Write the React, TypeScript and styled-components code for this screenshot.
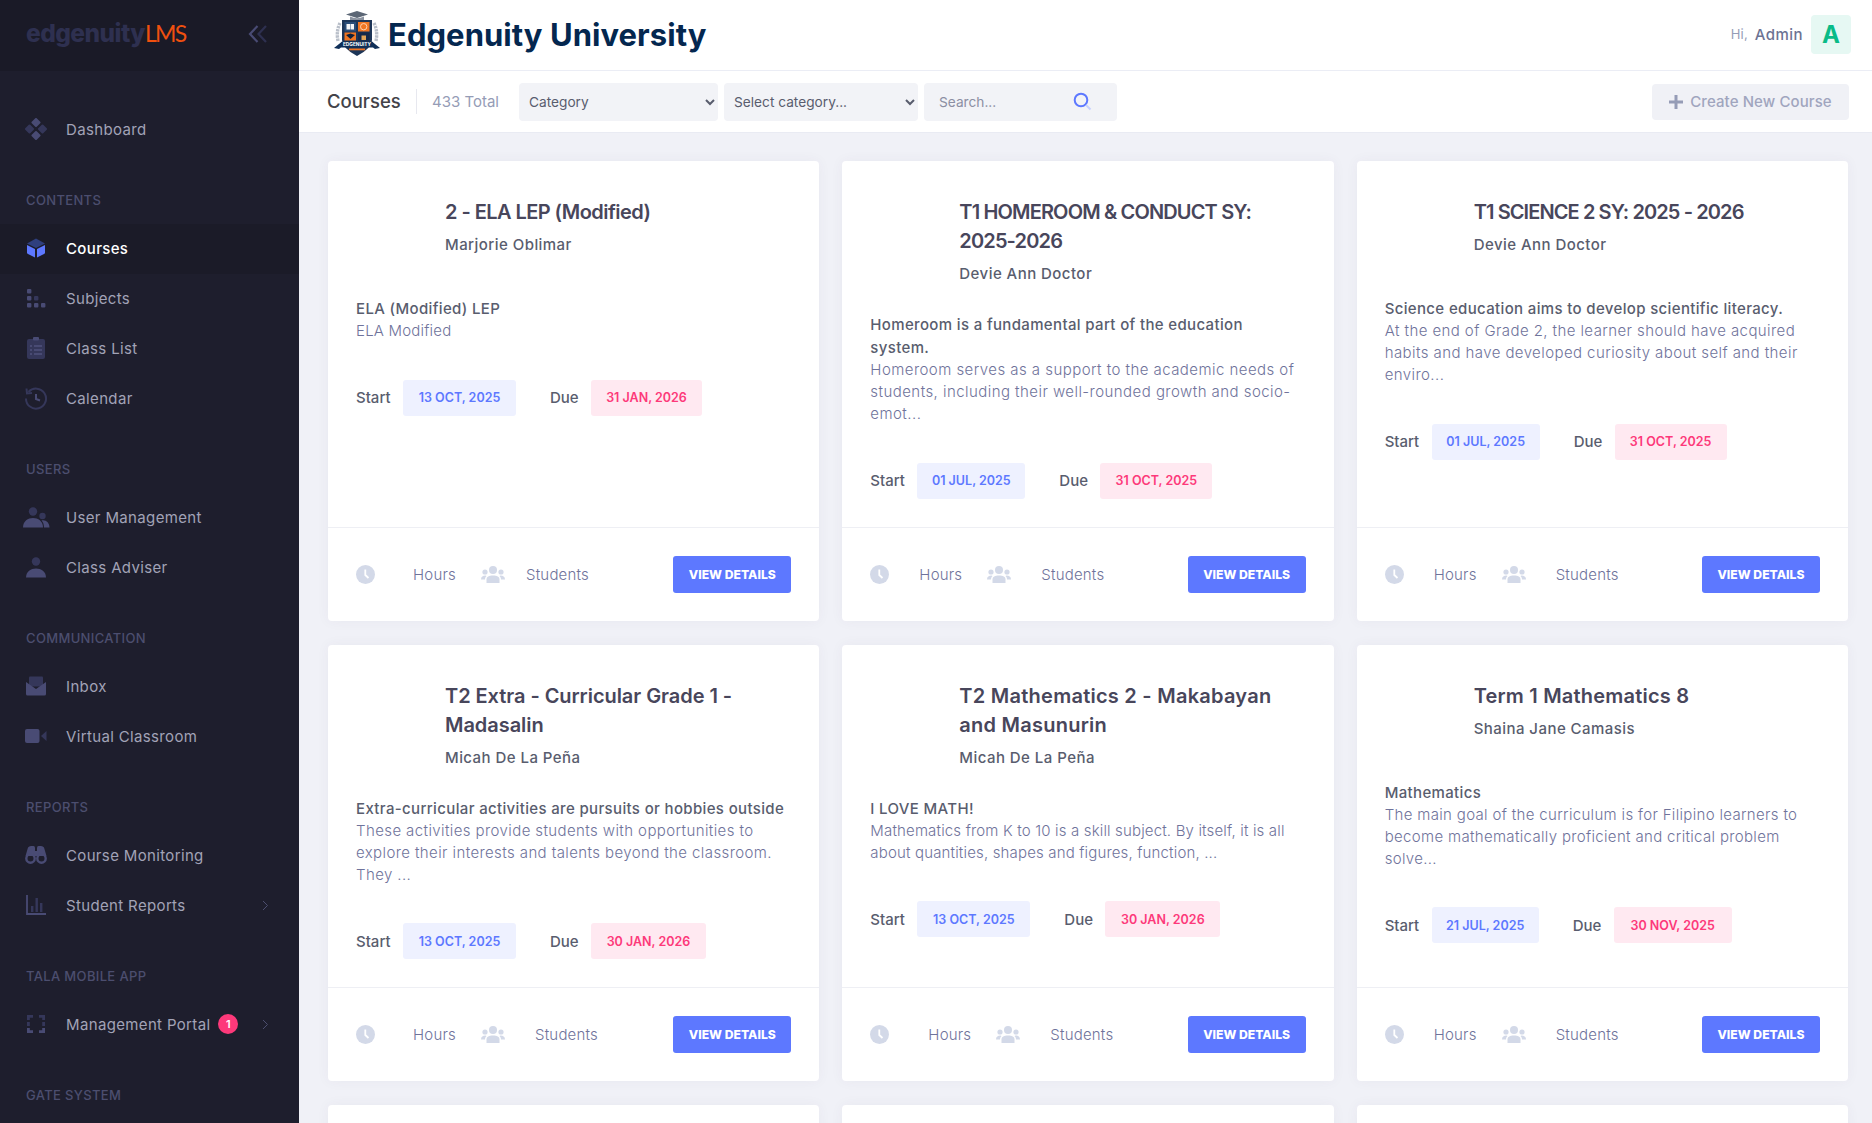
import React from 'react';
import styled, { createGlobalStyle } from 'styled-components';

const FONT = `Inter, "Open Sans", "Liberation Sans", sans-serif`;

const Global = createGlobalStyle`
  html, body { margin: 0; padding: 0; height: 100%; overflow: hidden; background: #f0f1f7; }
  * { box-sizing: border-box; }
  body { font-family: ${FONT}; }
`;

const Page = styled.div`display: flex; height: 1123px; overflow: hidden;`;

const Sidebar = styled.aside`
  width: 299px; flex: none; background: #1e1e2d; height: 100%; overflow: hidden;
`;
const Brand = styled.div`
  height: 71px; background: #1a1a27; display: flex; align-items: center;
  justify-content: space-between; padding: 0 31px 4px 26px;
`;
const BrandName = styled.div`
  font-size: 24.5px; font-weight: 800; color: #2e3050; letter-spacing: -0.55px; line-height: 1;
  span { font-family: Lato, sans-serif; color: #f0500f; font-weight: 400; font-size: 23px; letter-spacing: -1.6px; }
`;
const Nav = styled.nav`padding-top: 34px;`;
const Section = styled.div`
  height: 48px; margin-top: 21px; padding-left: 26px; display: flex; align-items: center;
  color: #4c4e6f; font-size: 13px; font-weight: 500; letter-spacing: 0.35px; text-transform: uppercase;
`;
const Item = styled.div<{ $active?: boolean }>`
  height: 50px; display: flex; align-items: center; padding: 0 30px 2px 22px;
  background: ${p => (p.$active ? '#1b1b28' : 'transparent')};
  color: ${p => (p.$active ? '#ffffff' : '#a2a3b7')};
  font-size: 15px; font-weight: ${p => (p.$active ? 500 : 400)}; letter-spacing: 0.35px;
`;
const ItemIcon = styled.span`
  width: 28px; height: 24px; margin-right: 16px; flex: none; display: flex; align-items: center; justify-content: center;
`;
const ItemLabel = styled.span`white-space: nowrap;`;
const Badge = styled.span`
  width: 20px; height: 20px; border-radius: 50%; background: #fd397a; color: #fff; margin-left: 8px;
  font-size: 11px; font-weight: 600; display: flex; align-items: center; justify-content: center; letter-spacing: 0;
`;
const Arrow = styled.span`margin-left: auto; display: flex; align-items: center;`;

const Main = styled.main`flex: 1; min-width: 0; display: flex; flex-direction: column; height: 100%;`;
const TopBar = styled.header`
  height: 71px; flex: none; background: #fff; border-bottom: 1px solid #ebedf5; display: flex;
  align-items: center; justify-content: space-between; padding: 0 21px 2px 35px;
`;
const Org = styled.div`display: flex; align-items: center; gap: 8px;`;
const OrgName = styled.div`
  font-size: 31px; font-weight: 700; color: #04274f; letter-spacing: 0.05px; line-height: 1;
`;
const User = styled.div`display: flex; align-items: center;`;
const Hi = styled.span`font-size: 13px; color: #959cb6; margin-right: 7px; letter-spacing: 0.2px;`;
const UserName = styled.span`font-size: 15px; font-weight: 500; color: #6c7293; margin-right: 8px; letter-spacing: 0.45px;`;
const Avatar = styled.div`
  width: 40px; height: 39px; border-radius: 4px; background: #e6f8f3; color: #0abb87; font-size: 24px;
  font-weight: 700; display: flex; align-items: center; justify-content: center;
`;
const ToolBar = styled.div`
  height: 62px; flex: none; background: #fff; border-bottom: 1px solid #e9ebf3; display: flex;
  align-items: center; padding: 0 23px 0 28px;
`;
const PageTitle = styled.h3`
  margin: 0; font-size: 18.5px; font-weight: 500; color: #434349; border-right: 1px solid #e7e8ef;
  height: 25px; line-height: 25px; width: 90px; white-space: nowrap;
`;
const Total = styled.span`
  font-size: 15px; font-weight: 400; color: #959cb6; margin-left: 15px; width: 87px; white-space: nowrap;
`;
const Select = styled.select<{ $w: number }>`
  width: ${p => p.$w}px; height: 38px; border: 0; border-radius: 4px; background: #f2f3f7; color: #595d6e;
  font-family: ${FONT}; font-size: 13.7px; padding: 0 6px; margin-right: 6px; outline: none;
`;
const SearchBox = styled.div`
  width: 193px; height: 38px; border-radius: 4px; background: #f2f3f7; display: flex; align-items: center;
  justify-content: space-between; padding: 0 25px 0 15px; color: #8c8fa3; font-size: 13.7px;
`;
const CreateBtn = styled.button`
  margin-left: auto; width: 197px; height: 36px; border: 0; border-radius: 4px; background: #f0f1f6;
  color: #a0a5be; font-family: ${FONT}; font-size: 15px; font-weight: 500; display: flex; align-items: center;
  justify-content: center; gap: 7px; padding: 0; letter-spacing: 0.1px;
`;
const Content = styled.div`
  flex: 1; min-height: 0; overflow: hidden; padding: 28px 24px 0 29px;
`;
const Grid = styled.div`display: grid; grid-template-columns: repeat(3, 1fr); gap: 24px 23px;`;
const Card = styled.article`
  background: #fff; border-radius: 4px; box-shadow: 0 0 13px rgba(82, 63, 105, 0.05); display: flex; flex-direction: column;
`;
const CardBody = styled.div`flex: 1; padding: 37px 28px 28px 28px;`;
const CardHead = styled.div`padding-left: 89px; min-height: 71px; margin-bottom: 28px;`;
const Title = styled.h4<{ $ls: number }>`
  margin: 0; font-size: 20px; font-weight: 600; line-height: 29px; color: #48465b; white-space: nowrap;
  letter-spacing: ${p => p.$ls}px;
`;
const Teacher = styled.div`
  margin-top: 7px; font-size: 15px; line-height: 22px; font-weight: 500; color: #595d6e; letter-spacing: 0.45px;
`;
const Lead = styled.div`
  font-size: 15px; line-height: 23px; font-weight: 500; color: #595d6e; white-space: nowrap; letter-spacing: 0.35px;
`;
const Desc = styled.div<{ $ls: number }>`
  font-size: 15px; line-height: 22px; font-weight: 300; color: #6f739b; white-space: nowrap;
  letter-spacing: ${p => p.$ls}px;
`;
const Dates = styled.div`display: flex; align-items: center; margin-top: 37.5px;`;
const DateLabel = styled.span<{ $w: number }>`
  font-size: 15px; font-weight: 500; color: #595d6e; width: ${p => p.$w}px; flex: none;
`;
const Chip = styled.span<{ $due?: boolean; $w: number }>`
  width: ${p => p.$w}px; height: 36px; border-radius: 3px; display: flex; align-items: center; justify-content: center;
  font-size: 12.5px; font-weight: 600; white-space: nowrap; margin-right: ${p => (p.$due ? 0 : 34)}px;
  background: ${p => (p.$due ? '#ffe9f1' : '#eef1ff')};
  color: ${p => (p.$due ? '#fd397a' : '#5d78ff')};
`;
const CardFooter = styled.footer`
  height: 94px; border-top: 1px solid #eeeff4; display: flex; align-items: center; padding: 0 28px 0 28px; flex: none;
`;
const Meta = styled.span<{ $pad: number; $w: number }>`
  font-size: 15px; font-weight: 300; color: #6f739b; margin-left: ${p => p.$pad}px; width: ${p => p.$w}px;
  white-space: nowrap; letter-spacing: 0.2px;
`;
const MetaIcon = styled.span<{ $gap?: number }>`
  display: flex; align-items: center; flex: none; margin-left: ${p => p.$gap ?? 0}px;
`;
const ViewBtn = styled.button`
  margin-left: auto; width: 118px; height: 37px; border: 0; border-radius: 3px; background: #5d78ff; color: #fff;
  font-family: ${FONT}; font-size: 12.2px; font-weight: 800; padding: 0;
`;
const BlankCard = styled(Card)`height: 300px;`;

const C = '#494b74';
const D = '#35375a';
const icons: Record<string, React.ReactNode> = {
  dash: (
    <svg width="22" height="22" viewBox="0 0 22 22">
      <rect x="7.5" y="1" width="7" height="7" rx="1" transform="rotate(45 11 4.5)" fill={C} />
      <rect x="7.5" y="14" width="7" height="7" rx="1" transform="rotate(45 11 17.5)" fill={C} />
      <rect x="1" y="7.5" width="7" height="7" rx="1" transform="rotate(45 4.5 11)" fill={D} />
      <rect x="14" y="7.5" width="7" height="7" rx="1" transform="rotate(45 17.5 11)" fill={D} />
    </svg>
  ),
  cube: (
    <svg width="20" height="20" viewBox="0 0 20 20">
      <path d="M10 0.5 L19 5.5 L10 10 L1 5.5Z" fill="#2f3f7e" />
      <path d="M1 7 L9 11 V19.5 L2 16 Q1 15.5 1 14.5Z" fill="#5d78ff" />
      <path d="M19 7 L11 11 V19.5 L18 16 Q19 15.5 19 14.5Z" fill="#5d78ff" />
    </svg>
  ),
  subj: (
    <svg width="20" height="20" viewBox="0 0 20 20" fill={C}>
      <rect x="1" y="1" width="4.4" height="4.4" rx="1" />
      <rect x="1" y="8" width="4.4" height="4.4" rx="1" />
      <rect x="8" y="8" width="4.4" height="4.4" rx="1" fill={D} />
      <rect x="1" y="15" width="4.4" height="4.4" rx="1" />
      <rect x="8" y="15" width="4.4" height="4.4" rx="1" />
      <rect x="15" y="15" width="4.4" height="4.4" rx="1" />
    </svg>
  ),
  list: (
    <svg width="20" height="24" viewBox="0 0 20 24">
      <rect x="1" y="3" width="18" height="20" rx="2" fill={D} />
      <rect x="7" y="1" width="6" height="3.5" rx="1" fill={C} />
      <g fill={C}>
        <rect x="4" y="9" width="2" height="2" /><rect x="8" y="9" width="8" height="2" />
        <rect x="4" y="13" width="2" height="2" /><rect x="8" y="13" width="8" height="2" />
        <rect x="4" y="17" width="2" height="2" /><rect x="8" y="17" width="8" height="2" />
      </g>
    </svg>
  ),
  cal: (
    <svg width="24" height="24" viewBox="0 0 24 24" fill="none">
      <path d="M4.5 6 A10 10 0 1 1 2 12.5" stroke={D} strokeWidth="2" />
      <path d="M2.5 2.5 L3 7.5 L8 7" stroke={D} strokeWidth="2" />
      <path d="M12 8 V13 L16 14.5" stroke={C} strokeWidth="2" />
    </svg>
  ),
  users: (
    <svg width="27" height="21" viewBox="0 0 27 21">
      <circle cx="10" cy="4.5" r="4.2" fill={D} />
      <circle cx="19.5" cy="9" r="3.2" fill={D} />
      <path d="M0 20.5 C0 14 5 11 10 11 C15 11 20 14 20 20.5Z" fill={C} />
      <path d="M21 20.5 C21 17 20 15 18.5 13.5 C23 12.5 26.5 16 26.5 20.5Z" fill={C} />
    </svg>
  ),
  user: (
    <svg width="20" height="21" viewBox="0 0 20 21">
      <circle cx="10" cy="4.5" r="4.2" fill={D} />
      <path d="M0 20.5 C0 14.5 5 11.5 10 11.5 C15 11.5 20 14.5 20 20.5Z" fill={C} />
    </svg>
  ),
  inbox: (
    <svg width="20" height="20" viewBox="0 0 20 20">
      <rect x="3" y="0.5" width="14" height="10" rx="1" fill={D} />
      <path d="M0 6 L10 13 L20 6 V18 Q20 19.5 18.5 19.5 H1.5 Q0 19.5 0 18Z" fill={C} />
    </svg>
  ),
  video: (
    <svg width="22" height="14" viewBox="0 0 22 14">
      <rect x="0" y="0" width="14.5" height="14" rx="2" fill={C} />
      <path d="M16 7 L21.5 2 V12Z" fill={D} />
    </svg>
  ),
  bino: (
    <svg width="22" height="18" viewBox="0 0 22 18">
      <path d="M3 1.5 Q4 0 6 0 H8.5 Q10 0 10 2 V5 H12 V2 Q12 0 13.5 0 H16 Q18 0 19 1.5 L21.5 10 H0.5Z" fill={C} />
      <circle cx="5.5" cy="12.5" r="4.2" fill="none" stroke={C} strokeWidth="2.4" />
      <circle cx="16.5" cy="12.5" r="4.2" fill="none" stroke={C} strokeWidth="2.4" />
    </svg>
  ),
  chart: (
    <svg width="20" height="20" viewBox="0 0 20 20">
      <path d="M1 0 V19 H20" fill="none" stroke={C} strokeWidth="1.8" />
      <rect x="5" y="11" width="2.4" height="6" fill={D} />
      <rect x="9.5" y="3" width="2.4" height="14" fill={D} />
      <rect x="14" y="8" width="2.4" height="9" fill={D} />
    </svg>
  ),
  scan: (
    <svg width="18" height="18" viewBox="0 0 18 18" fill="none" strokeWidth="2.8">
      <path d="M1.4 5 V1.4 H6 M12 1.4 H16.6 V5" stroke={D} />
      <path d="M1.4 7 V11 M16.6 7 V11" stroke={D} />
      <path d="M1.4 13 V16.6 H6 M12 16.6 H16.6 V13" stroke={C} />
    </svg>
  ),
};

const Clock = () => (
  <svg width="19" height="19" viewBox="0 0 19 19">
    <circle cx="9.5" cy="9.5" r="9.5" fill="#d3d9e8" />
    <path d="M9.3 4.5 V10 L12.5 13" fill="none" stroke="#fff" strokeWidth="1.8" />
  </svg>
);
const People = () => (
  <svg width="24" height="17" viewBox="0 0 24 17" fill="#d3d9e8">
    <circle cx="12" cy="4" r="4" />
    <circle cx="4" cy="6" r="2.6" />
    <circle cx="20" cy="6" r="2.6" />
    <path d="M5.5 17 V13.5 C5.5 10.5 8 9.5 12 9.5 C16 9.5 18.5 10.5 18.5 13.5 V17Z" />
    <path d="M0 13.5 C0 10.5 2 9.5 4.5 9.5 L5.5 10 C4.5 11 4 12 4 13.5Z" />
    <path d="M24 13.5 C24 10.5 22 9.5 19.5 9.5 L18.5 10 C19.5 11 20 12 20 13.5Z" />
  </svg>
);
const Chevron = () => (
  <svg width="7" height="11" viewBox="0 0 7 11" fill="none"><path d="M1 1 L5.5 5.5 L1 10" stroke="#4c4e6f" strokeWidth="1" /></svg>
);

const Shield = () => (
  <svg width="46" height="46" viewBox="0 0 46 46">
    <path d="M6 12 Q2 20 4 30 M40 12 Q44 20 42 30" fill="none" stroke="#b9bfc9" strokeWidth="3.4" strokeDasharray="2.4 0.8" />
    <path d="M12 3.5 L23 0 L34 3.5 L23 7Z" fill="#5b6675" />
    <path d="M16 5.5 Q23 9 30 5.5 V9 H16Z" fill="#8b93a0" />
    <path d="M8 9 H38 V29 Q38 37 23 45 Q8 37 8 29Z" fill="#1d3557" />
    <rect x="10.5" y="11" width="11.5" height="9.5" fill="#2a4d78" />
    <path d="M12.5 13 H16 V18.5 H12.5Z M16.5 13 H20 V18.5 H16.5Z" fill="#f4f5f7" />
    <rect x="24" y="11" width="11.5" height="9.5" fill="#f07522" />
    <circle cx="29.7" cy="15.7" r="3.2" fill="none" stroke="#ffd9bd" strokeWidth="0.9" />
    <rect x="10.5" y="21.5" width="11.5" height="8" fill="#f07522" />
    <rect x="24" y="21.5" width="11.5" height="8" fill="#15294a" />
    <path d="M12 24 L16.5 22.5 L21 24 L16.5 28Z" fill="#10203a" />
    <path d="M27.5 29 V24.5 H32 V29Z" fill="#e0a458" />
    <path d="M0 37 L5 33 L8 30.5 H38 L41 33 L46 37 L41 38 L39 36.5 H7 L5 38Z" fill="#0f2f58" />
    <text x="23" y="35.3" textAnchor="middle" fontSize="4.8" fontWeight="700" fill="#fff" fontFamily={FONT}>EDGENUITY</text>
    <rect x="15" y="37.5" width="16" height="1.8" fill="#f07522" />
  </svg>
);

const CollapseIcon = () => (
  <svg width="20" height="20" viewBox="0 0 20 20" fill="none" strokeWidth="2.2">
    <path d="M9.5 2 L2 10 L9.5 18" stroke="#494b74" />
    <path d="M18 2 L10.5 10 L18 18" stroke="#2e3050" />
  </svg>
);

type NavRow = { s?: string; t?: string; i?: string; a?: boolean; arrow?: boolean; badge?: string };
const nav: NavRow[] = [
  { t: 'Dashboard', i: 'dash' },
  { s: 'Contents' },
  { t: 'Courses', i: 'cube', a: true },
  { t: 'Subjects', i: 'subj' },
  { t: 'Class List', i: 'list' },
  { t: 'Calendar', i: 'cal' },
  { s: 'Users' },
  { t: 'User Management', i: 'users' },
  { t: 'Class Adviser', i: 'user' },
  { s: 'Communication' },
  { t: 'Inbox', i: 'inbox' },
  { t: 'Virtual Classroom', i: 'video' },
  { s: 'Reports' },
  { t: 'Course Monitoring', i: 'bino' },
  { t: 'Student Reports', i: 'chart', arrow: true },
  { s: 'Tala Mobile App' },
  { t: 'Management Portal', i: 'scan', arrow: true, badge: '1' },
  { s: 'Gate System' },
];

type CourseData = {
  title: string[]; titleLs: number; teacher: string; lead: string[]; desc: string[]; descLs: number;
  start: string; due: string; startW: number; dueW: number; dueLabelW: number;
  hoursPad: number; studentsPad: number;
};
const courses: CourseData[] = [
  { title: ['2 - ELA LEP (Modified)'], titleLs: -0.55, teacher: 'Marjorie Oblimar', lead: ['ELA (Modified) LEP'], desc: ['ELA Modified'], descLs: 0.2,
    start: '13 OCT, 2025', due: '31 JAN, 2026', startW: 113, dueW: 111, dueLabelW: 41, hoursPad: 38, studentsPad: 21 },
  { title: ['T1 HOMEROOM & CONDUCT SY:', '2025-2026'], titleLs: -0.85, teacher: 'Devie Ann Doctor',
    lead: ['Homeroom is a fundamental part of the education', 'system.'],
    desc: ['Homeroom serves as a support to the academic needs of', 'students, including their well-rounded growth and socio-', 'emot...'], descLs: 0.45,
    start: '01 JUL, 2025', due: '31 OCT, 2025', startW: 108, dueW: 112, dueLabelW: 41, hoursPad: 30, studentsPad: 30 },
  { title: ['T1 SCIENCE 2 SY: 2025 - 2026'], titleLs: -0.9, teacher: 'Devie Ann Doctor', lead: ['Science education aims to develop scientific literacy.'],
    desc: ['At the end of Grade 2, the learner should have acquired', 'habits and have developed curiosity about self and their', 'enviro...'], descLs: 0.42,
    start: '01 JUL, 2025', due: '31 OCT, 2025', startW: 108, dueW: 112, dueLabelW: 41, hoursPad: 30, studentsPad: 30 },
  { title: ['T2 Extra - Curricular Grade 1 -', 'Madasalin'], titleLs: -0.05, teacher: 'Micah De La Peña', lead: ['Extra-curricular activities are pursuits or hobbies outside'],
    desc: ['These activities provide students with opportunities to', 'explore their interests and talents beyond the classroom.', 'They ...'], descLs: 0.4,
    start: '13 OCT, 2025', due: '30 JAN, 2026', startW: 113, dueW: 115, dueLabelW: 41, hoursPad: 38, studentsPad: 30 },
  { title: ['T2 Mathematics 2 - Makabayan', 'and Masunurin'], titleLs: 0.25, teacher: 'Micah De La Peña', lead: ['I LOVE MATH!'],
    desc: ['Mathematics from K to 10 is a skill subject. By itself, it is all', 'about quantities, shapes and figures, function, ...'], descLs: 0.16,
    start: '13 OCT, 2025', due: '30 JAN, 2026', startW: 113, dueW: 115, dueLabelW: 41, hoursPad: 39, studentsPad: 30 },
  { title: ['Term 1 Mathematics 8'], titleLs: 0.2, teacher: 'Shaina Jane Camasis', lead: ['Mathematics'],
    desc: ['The main goal of the curriculum is for Filipino learners to', 'become mathematically proficient and critical problem', 'solve...'], descLs: 0.33,
    start: '21 JUL, 2025', due: '30 NOV, 2025', startW: 107, dueW: 118, dueLabelW: 41, hoursPad: 30, studentsPad: 30 },
];

const Lines = ({ rows }: { rows: string[] }) => (
  <>
    {rows.map((r, i) => (
      <React.Fragment key={i}>
        {i > 0 && <br />}
        {r}
      </React.Fragment>
    ))}
  </>
);

const CourseCard = ({ c }: { c: CourseData }) => (
  <Card>
    <CardBody>
      <CardHead>
        <Title $ls={c.titleLs}><Lines rows={c.title} /></Title>
        <Teacher>{c.teacher}</Teacher>
      </CardHead>
      <Lead><Lines rows={c.lead} /></Lead>
      <Desc $ls={c.descLs}><Lines rows={c.desc} /></Desc>
      <Dates>
        <DateLabel $w={47}>Start</DateLabel>
        <Chip $w={c.startW}>{c.start}</Chip>
        <DateLabel $w={c.dueLabelW}>Due</DateLabel>
        <Chip $due $w={c.dueW}>{c.due}</Chip>
      </Dates>
    </CardBody>
    <CardFooter>
      <MetaIcon><Clock /></MetaIcon>
      <Meta $pad={c.hoursPad} $w={43}>Hours</Meta>
      <MetaIcon $gap={25}><People /></MetaIcon>
      <Meta $pad={c.studentsPad} $w={66}>Students</Meta>
      <ViewBtn>VIEW DETAILS</ViewBtn>
    </CardFooter>
  </Card>
);

export default function App() {
  return (
    <>
      <Global />
      <Page>
        <Sidebar>
          <Brand>
            <BrandName>edgenuity<span>LMS</span></BrandName>
            <CollapseIcon />
          </Brand>
          <Nav>
            {nav.map((n, i) =>
              n.s ? (
                <Section key={i}>{n.s}</Section>
              ) : (
                <Item key={i} $active={n.a}>
                  <ItemIcon>{icons[n.i!]}</ItemIcon>
                  <ItemLabel>{n.t}</ItemLabel>
                  {n.badge && <Badge>{n.badge}</Badge>}
                  {n.arrow && <Arrow><Chevron /></Arrow>}
                </Item>
              ),
            )}
          </Nav>
        </Sidebar>
        <Main>
          <TopBar>
            <Org>
              <Shield />
              <OrgName>Edgenuity University</OrgName>
            </Org>
            <User>
              <Hi>Hi,</Hi>
              <UserName>Admin</UserName>
              <Avatar>A</Avatar>
            </User>
          </TopBar>
          <ToolBar>
            <PageTitle>Courses</PageTitle>
            <Total>433 Total</Total>
            <Select $w={199} defaultValue="Category"><option>Category</option></Select>
            <Select $w={194} defaultValue="Select category..."><option>Select category...</option></Select>
            <SearchBox>
              Search...
              <svg width="19" height="19" viewBox="0 0 19 19" fill="none">
                <circle cx="8" cy="8" r="6.3" stroke="#5d78ff" strokeWidth="2" />
                <path d="M13 13 L17.5 17.5" stroke="#c7d1ff" strokeWidth="2" />
              </svg>
            </SearchBox>
            <CreateBtn>
              <svg width="14" height="14" viewBox="0 0 14 14"><path d="M7 0 V14 M0 7 H14" stroke="#959cb6" strokeWidth="3" /></svg>
              Create New Course
            </CreateBtn>
          </ToolBar>
          <Content>
            <Grid>
              {courses.map((c, i) => <CourseCard key={i} c={c} />)}
              <BlankCard /><BlankCard /><BlankCard />
            </Grid>
          </Content>
        </Main>
      </Page>
    </>
  );
}
